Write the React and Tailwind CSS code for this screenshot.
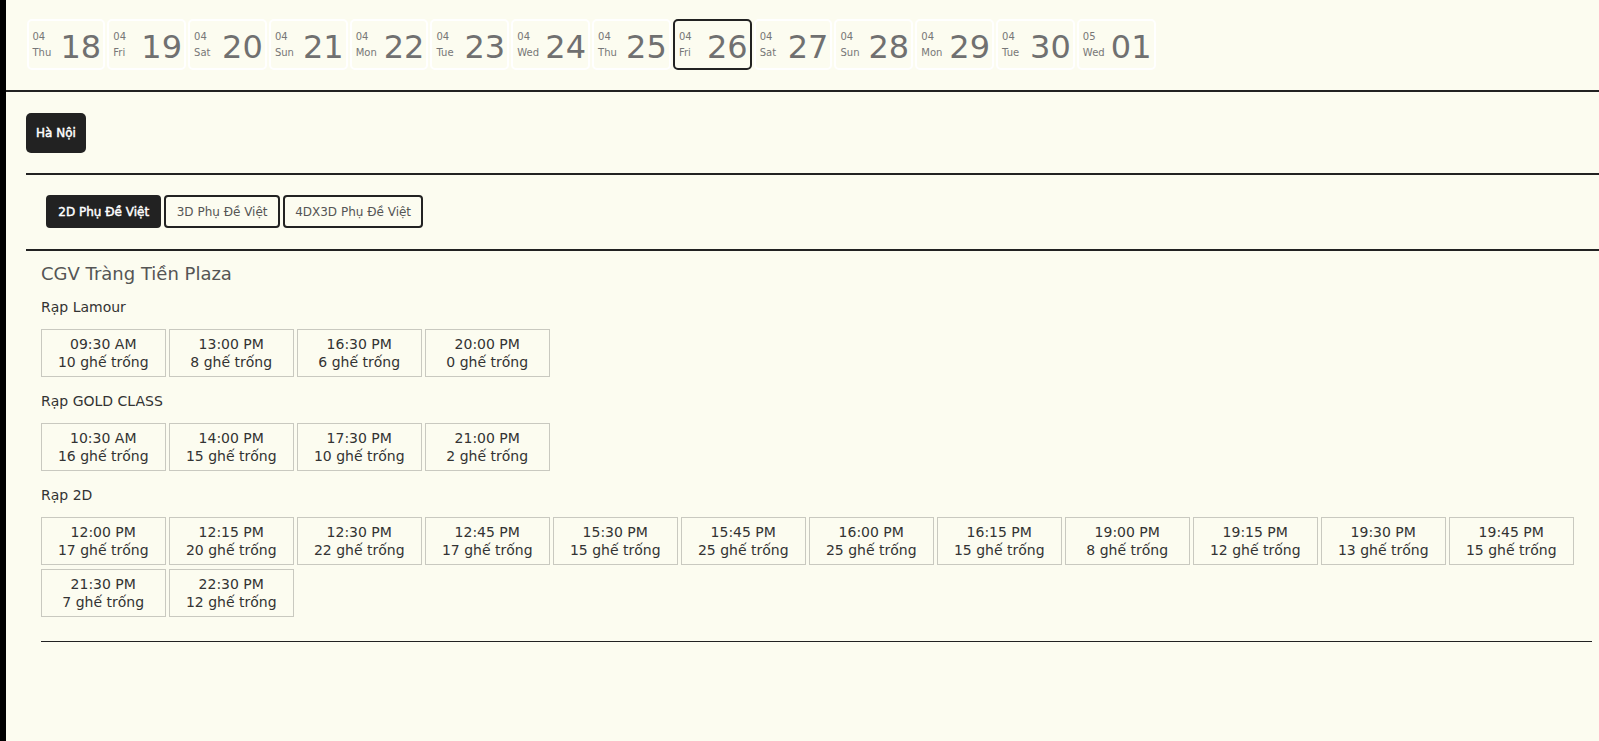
import React from "react";

const dates = [
  { m: "04", d: "Thu", n: "18" },
  { m: "04", d: "Fri", n: "19" },
  { m: "04", d: "Sat", n: "20" },
  { m: "04", d: "Sun", n: "21" },
  { m: "04", d: "Mon", n: "22" },
  { m: "04", d: "Tue", n: "23" },
  { m: "04", d: "Wed", n: "24" },
  { m: "04", d: "Thu", n: "25" },
  { m: "04", d: "Fri", n: "26", active: true },
  { m: "04", d: "Sat", n: "27" },
  { m: "04", d: "Sun", n: "28" },
  { m: "04", d: "Mon", n: "29" },
  { m: "04", d: "Tue", n: "30" },
  { m: "05", d: "Wed", n: "01" },
];

const formats = ["2D Phụ Đề Việt", "3D Phụ Đề Việt", "4DX3D Phụ Đề Việt"];

const rooms = [
  {
    name: "Rạp Lamour",
    times: [
      ["09:30 AM", 10],
      ["13:00 PM", 8],
      ["16:30 PM", 6],
      ["20:00 PM", 0],
    ],
  },
  {
    name: "Rạp GOLD CLASS",
    times: [
      ["10:30 AM", 16],
      ["14:00 PM", 15],
      ["17:30 PM", 10],
      ["21:00 PM", 2],
    ],
  },
  {
    name: "Rạp 2D",
    times: [
      ["12:00 PM", 17],
      ["12:15 PM", 20],
      ["12:30 PM", 22],
      ["12:45 PM", 17],
      ["15:30 PM", 15],
      ["15:45 PM", 25],
      ["16:00 PM", 25],
      ["16:15 PM", 15],
      ["19:00 PM", 8],
      ["19:15 PM", 12],
      ["19:30 PM", 13],
      ["19:45 PM", 15],
      ["21:30 PM", 7],
      ["22:30 PM", 12],
    ],
  },
];

function DateBox({ m, d, n, active }) {
  return (
    <div
      className={
        "w-[78.8px] h-[51px] shrink-0 flex items-center rounded-[5px] border-2 pl-[4px] " +
        (active ? "border-[#222]" : "border-white")
      }
    >
      <div className="w-[28px] shrink-0 text-[10px] leading-[16px] text-[#777]">
        <div>{m}</div>
        <div>{d}</div>
      </div>
      <div className="text-[32px] leading-[36px] pt-[4px] text-[#707070]">{n}</div>
    </div>
  );
}

export default function App() {
  return (
    <div className="min-h-screen flex bg-[#fcfcf0] font-['DejaVu_Sans',sans-serif]">
      <div className="w-[6px] shrink-0 bg-black" />
      <div className="flex-1 min-w-0">
        {/* date strip */}
        <div className="h-[92px] border-b-2 border-[#222] pt-[19px] pl-[20.5px]">
          <div className="flex gap-[2px]">
            {dates.map((x) => (
              <DateBox key={x.n} {...x} />
            ))}
          </div>
        </div>

        <div className="pl-[20px]">
          {/* city */}
          <div className="pt-[21px] pb-[20px]">
            <button className="w-[60px] h-[40px] rounded-[5px] bg-[#222] text-white text-[12px] [-webkit-text-stroke:0.45px_white]">
              Hà Nội
            </button>
          </div>

          {/* formats */}
          <div className="border-t-2 border-[#222] pt-[20px] pb-[21px] pl-[20px] flex gap-[3px]">
            {formats.map((f, i) => (
              <button
                key={f}
                className={
                  "h-[33px] px-[10.3px] rounded-[4px] border-2 border-[#222] text-[12px] " +
                  (i === 0 ? "bg-[#222] text-white [-webkit-text-stroke:0.45px_white]" : "text-[#555]")
                }
              >
                {f}
              </button>
            ))}
          </div>

          {/* cinema */}
          <div className="border-t-2 border-[#222] pt-[11px] pl-[15px] pr-[7px]">
            <h2 className="text-[18px] leading-[24px] text-[#555]">CGV Tràng Tiền Plaza</h2>
            {rooms.map((r, idx) => (
              <div key={r.name} className={idx === 0 ? "mt-[11px]" : "mt-[14px]"}>
                <div className="text-[14px] leading-[20px] text-[#333]">{r.name}</div>
                <div className="mt-[12px] flex flex-wrap gap-x-[3.5px] gap-y-[4px]">
                  {r.times.map(([t, s]) => (
                    <div
                      key={t}
                      className="w-[124.5px] h-[48px] border border-[#c9c9c0] flex flex-col items-center justify-center text-[14px] leading-[18px] text-[#333]"
                    >
                      <div>{t}</div>
                      <div>{s} ghế trống</div>
                    </div>
                  ))}
                </div>
              </div>
            ))}
            <div className="mt-[24px] border-t border-[#222]" />
          </div>
        </div>
      </div>
    </div>
  );
}
